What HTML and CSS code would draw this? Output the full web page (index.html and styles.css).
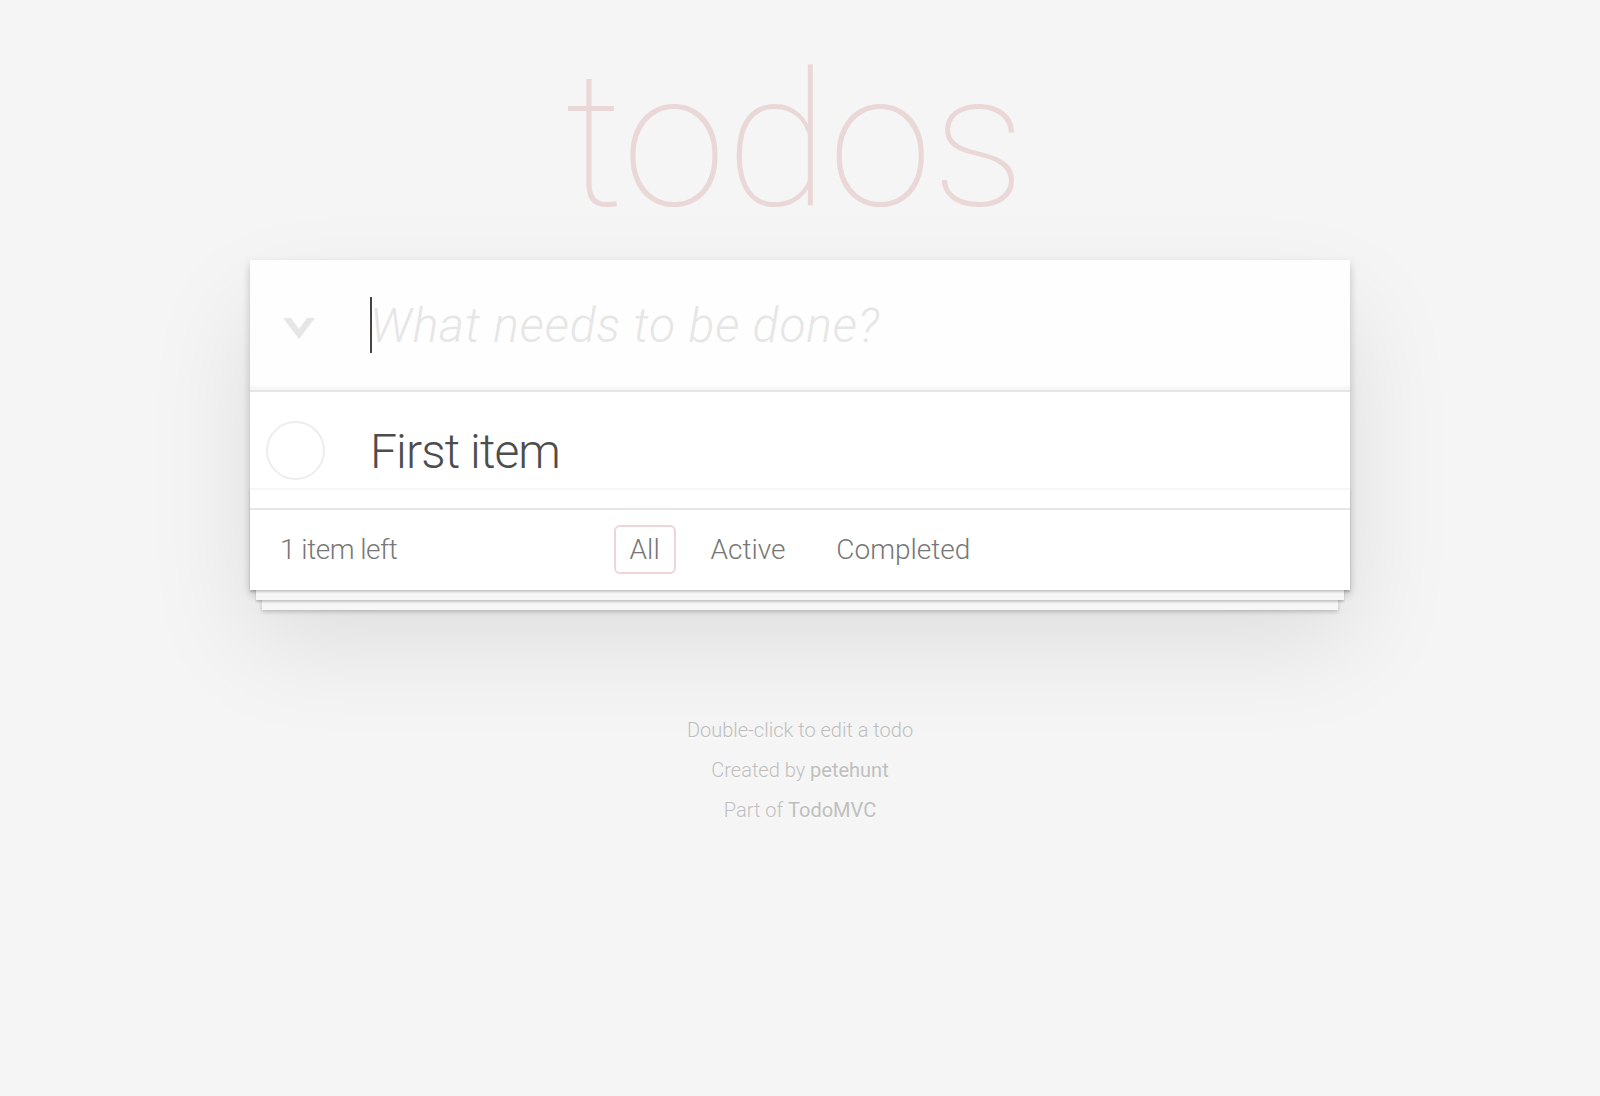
FILE: index.html
```html
<!DOCTYPE html>
<html lang="en">
<head>
<meta charset="utf-8">
<title>React • TodoMVC</title>
<link rel="stylesheet" href="styles.css">
</head>
<body>
<div class="page">
  <section class="todoapp">
    <header class="header">
      <h1>todos</h1>
      <label class="toggle-all" aria-label="Mark all as complete">
        <svg width="32" height="21" viewBox="0 0 32 21"><polygon points="0,0 8,0 16,11 24,0 32,0 16,21" fill="#e6e6e6"/></svg>
      </label>
      <input class="new-todo" placeholder="What needs to be done?">
      <span class="caret"></span>
    </header>
    <section class="main">
      <ul class="todo-list">
        <li>
          <span class="toggle"></span>
          <label class="todo-label">First item</label>
        </li>
      </ul>
    </section>
    <footer class="footer">
      <span class="todo-count"><strong>1</strong> item left</span>
      <ul class="filters">
        <li><a href="#/" class="selected">All</a></li>
        <li><a href="#/active">Active</a></li>
        <li><a href="#/completed">Completed</a></li>
      </ul>
    </footer>
  </section>
  <footer class="info">
    <p>Double-click to edit a todo</p>
    <p>Created by <a href="#">petehunt</a></p>
    <p>Part of <a href="#">TodoMVC</a></p>
  </footer>
</div>
</body>
</html>
```

FILE: styles.css
```css
html, body {
  margin: 0;
  padding: 0;
}

body {
  font-family: "Roboto", "Helvetica Neue", "Liberation Sans", sans-serif;
  font-size: 28px;
  line-height: 39.2px;
  background: #f5f5f5;
  color: #4d4d4d;
  font-weight: 300;
  min-height: 1096px;
}

.page {
  max-width: 1100px;
  margin: 0 auto;
  padding-top: 1px;
  margin-top: -1px;
}

.todoapp {
  background: #fff;
  margin: 260px 0 80px 0;
  position: relative;
  box-shadow: 0 4px 8px 0 rgba(0, 0, 0, 0.2),
              0 50px 100px 0 rgba(0, 0, 0, 0.1);
}

.header {
  position: relative;
}

.header h1 {
  position: absolute;
  top: -213px;
  left: 0;
  width: 100%;
  margin: 0;
  padding-right: 10px;
  box-sizing: border-box;
  font-size: 188px;
  line-height: 188px;
  font-weight: 100;
  letter-spacing: 0;
  text-align: center;
  color: rgba(175, 47, 47, 0.15);
}

.toggle-all {
  position: absolute;
  left: 33px;
  top: 58px;
  width: 32px;
  height: 21px;
  display: block;
}

.toggle-all svg {
  display: block;
}

.new-todo {
  display: block;
  width: 100%;
  height: 130px;
  margin: 0;
  padding: 0 32px 0 120px;
  box-sizing: border-box;
  border: none;
  outline: none;
  font-family: inherit;
  font-size: 48px;
  font-weight: 300;
  color: #4d4d4d;
  background: #fefefe;
  box-shadow: inset 0 -4px 2px rgba(0, 0, 0, 0.03);
  caret-color: transparent;
}

.new-todo::placeholder {
  font-style: italic;
  font-weight: 300;
  letter-spacing: 0.9px;
  color: #e6e6e6;
}

.caret {
  position: absolute;
  left: 120px;
  top: 37px;
  width: 2px;
  height: 56px;
  background: #444;
}

.main {
  position: relative;
  z-index: 2;
  border-top: 2px solid #e6e6e6;
}

.todo-list {
  margin: 0;
  padding: 0;
  list-style: none;
}

.todo-list li {
  display: flex;
  align-items: center;
  font-size: 48px;
}

.toggle {
  flex: none;
  width: 59px;
  height: 59px;
  margin-left: 16px;
  box-sizing: border-box;
  border: 2px solid #ededed;
  border-radius: 50%;
}

.todo-label {
  display: block;
  flex: 1;
  padding: 31px 30px 27px 45px;
  line-height: 58px;
  letter-spacing: -0.9px;
  color: #4d4d4d;
}

.footer {
  position: relative;
  color: #777;
  padding: 20px 30px;
  height: 40px;
  text-align: center;
  border-top: 2px solid #e6e6e6;
}

.footer::before {
  content: "";
  position: absolute;
  right: 0;
  bottom: 0;
  left: 0;
  height: 102px;
  box-sizing: border-box;
  border-top: 2px solid #f7f7f7;
  box-shadow: 0 2px 2px rgba(0, 0, 0, 0.2),
              0 16px 0 -6px #f6f6f6,
              0 18px 2px -6px rgba(0, 0, 0, 0.2),
              0 32px 0 -12px #f6f6f6,
              0 34px 4px -12px rgba(0, 0, 0, 0.2);
}

.todo-count {
  float: left;
  text-align: left;
  letter-spacing: -0.5px;
}

.todo-count strong {
  font-weight: 300;
}

.filters {
  margin: 0;
  padding: 0;
  list-style: none;
  position: absolute;
  right: 0;
  left: 0;
}

.filters li {
  display: inline;
}

.filters li a {
  color: inherit;
  margin: 6px;
  padding: 6px 14px;
  text-decoration: none;
  border: 2px solid transparent;
  border-radius: 6px;
}

.filters li a.selected {
  border-color: rgba(175, 47, 47, 0.2);
}

.info {
  margin: 130px auto 0;
  color: #bfbfbf;
  font-size: 20px;
  text-shadow: 0 2px 0 rgba(255, 255, 255, 0.5);
  text-align: center;
}

.info p {
  line-height: 1;
  margin: 20px 0;
}

.info a {
  color: inherit;
  text-decoration: none;
  font-weight: 400;
}
```
